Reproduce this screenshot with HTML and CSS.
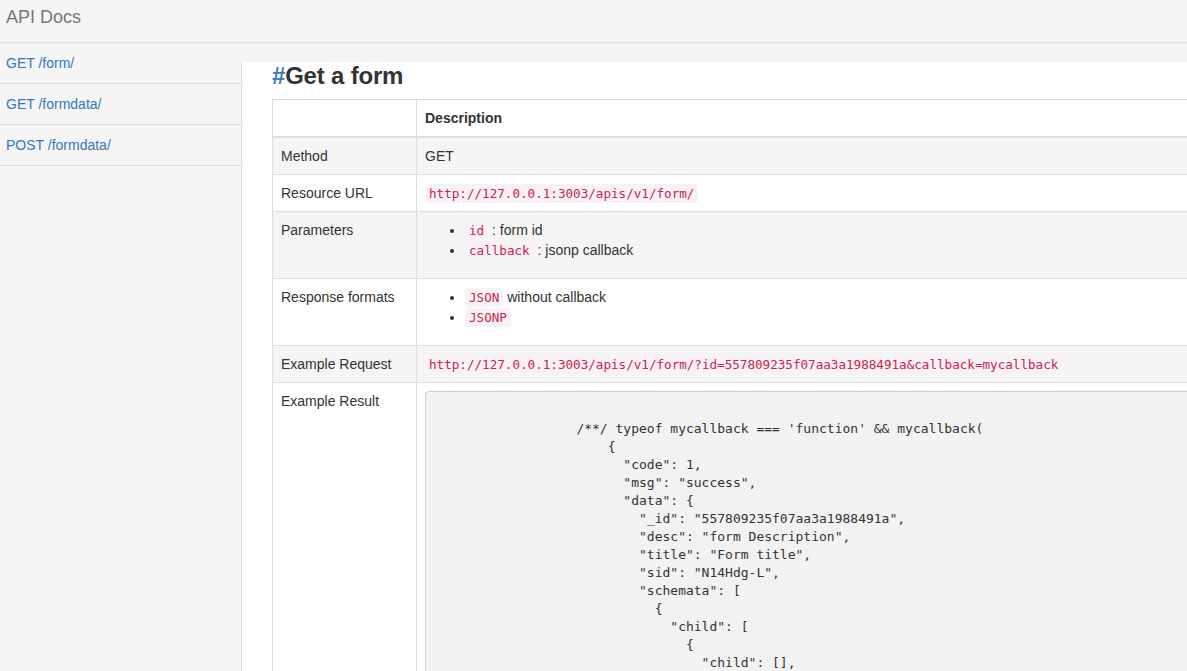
FILE: index.html
```html
<!DOCTYPE html>
<html>
<head>
<meta charset="utf-8">
<title>API Docs</title>
<link rel="stylesheet" href="styles.css">
</head>
<body>
<header class="navbar">
  <span class="brand">API Docs</span>
</header>
<div class="layout">
  <nav class="sidebar">
    <a class="side-item" href="#">GET /form/</a>
    <a class="side-item" href="#">GET /formdata/</a>
    <a class="side-item" href="#">POST /formdata/</a>
  </nav>
  <main class="content">
    <h3 class="title"><a class="anchor" href="#">#</a>Get a form</h3>
    <table class="doc-table">
      <thead>
        <tr><th class="col-key"></th><th>Description</th></tr>
      </thead>
      <tbody>
        <tr><td class="col-key">Method</td><td>GET</td></tr>
        <tr><td class="col-key">Resource URL</td><td><code>http://127.0.0.1:3003/apis/v1/form/</code></td></tr>
        <tr><td class="col-key">Parameters</td><td>
          <ul class="list">
            <li><code>id</code> : form id</li>
            <li><code>callback</code> : jsonp callback</li>
          </ul>
        </td></tr>
        <tr><td class="col-key">Response formats</td><td>
          <ul class="list">
            <li><code>JSON</code> without callback</li>
            <li><code>JSONP</code></li>
          </ul>
        </td></tr>
        <tr><td class="col-key">Example Request</td><td><code>http://127.0.0.1:3003/apis/v1/form/?id=557809235f07aa3a1988491a&amp;callback=mycallback</code></td></tr>
        <tr><td class="col-key">Example Result</td><td><pre class="result">

                  /**/ typeof mycallback === 'function' &amp;&amp; mycallback(
                      {
                        "code": 1,
                        "msg": "success",
                        "data": {
                          "_id": "557809235f07aa3a1988491a",
                          "desc": "form Description",
                          "title": "Form title",
                          "sid": "N14Hdg-L",
                          "schemata": [
                            {
                              "child": [
                                {
                                  "child": [],
                                  "_id": "557809235f07aa3a19884920",
                                  "label": "Name",
                                  "type": "text"
                                }
                              ]
                            }
                          ]
                        }
                      }
                  );
</pre></td></tr>
      </tbody>
    </table>
  </main>
</div>
</body>
</html>
```
FILE: styles.css
```css
html, body {
  margin: 0;
  padding: 0;
  overflow: hidden;
}

body {
  font-family: "Liberation Sans", Arial, sans-serif;
  font-size: 14px;
  line-height: 20px;
  color: #333;
  background: #f5f5f5;
}

.navbar {
  box-sizing: border-box;
  height: 43px;
  padding: 7px 6px 0;
  border-bottom: 1px solid #e0e0e0;
  background: #f5f5f5;
}

.brand {
  font-size: 18px;
  line-height: 20px;
  color: #777;
}

.layout {
  display: flex;
  align-items: flex-start;
}

.sidebar {
  width: 241px;
  flex: none;
  display: flex;
  flex-direction: column;
}

.side-item {
  display: block;
  padding: 10px 6px;
  line-height: 20px;
  color: #337ab7;
  text-decoration: none;
  border-bottom: 1px solid #dedede;
}

.content {
  flex: none;
  width: 1200px;
  margin-top: 19px;
  padding: 1px 0 0 30px;
  background: #fff;
  border-left: 1px solid #e3e3e3;
  min-height: 700px;
}

.title {
  margin: 0 0 10px;
  font-size: 24px;
  line-height: 26px;
  font-weight: bold;
  color: #333;
  letter-spacing: -0.2px;
}

.anchor {
  color: #337ab7;
  text-decoration: none;
}

.doc-table {
  border-collapse: collapse;
  border-spacing: 0;
  width: 1100px;
  border: 1px solid #ddd;
}

.doc-table th,
.doc-table td {
  border: 1px solid #ddd;
  padding: 8px;
  line-height: 20px;
  text-align: left;
  vertical-align: top;
}

.doc-table th {
  border-bottom: 2px solid #ddd;
  font-weight: bold;
}

.doc-table .col-key {
  width: 127px;
}

.doc-table tbody tr:nth-child(odd) {
  background: #f5f5f5;
}

code {
  font-family: "DejaVu Sans Mono", "Liberation Mono", monospace;
  font-size: 12.6px;
  line-height: 14px;
  padding: 2px 4px;
  color: #c7254e;
  background: #f9f2f4;
  border-radius: 4px;
}

.list {
  margin: 0 0 10px;
  padding-left: 40px;
}

.result {
  margin: 0;
  padding: 10px 9.5px 9.5px;
  font-family: "DejaVu Sans Mono", "Liberation Mono", monospace;
  font-size: 13px;
  line-height: 18px;
  color: #333;
  background: #f2f2f2;
  border: 1px solid #ccc;
  border-radius: 4px;
  white-space: pre;
}
```
